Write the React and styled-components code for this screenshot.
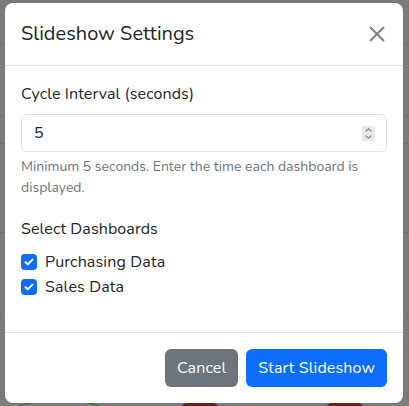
import React from "react";
import styled, { createGlobalStyle } from "styled-components";

const Global = createGlobalStyle`
  html, body { margin: 0; padding: 0; }
  body {
    width: 409px; height: 406px; overflow: hidden;
    background: #7b7b7b;
    font-family: "Nunito", "Lato", "Noto Sans", sans-serif;
    color: #212529;
  }
  * { box-sizing: border-box; }
`;

const Backdrop = styled.div`
  position: relative;
  width: 409px;
  height: 406px;
  padding: 3px 6px 0 5px;
  background:
    linear-gradient(#6f6f6f, #6f6f6f) 0 44px / 100% 1px no-repeat,
    linear-gradient(#707070, #707070) 0 115px / 100% 1px no-repeat,
    linear-gradient(#707070, #707070) 0 143px / 100% 1px no-repeat,
    linear-gradient(#707070, #707070) 0 232px / 100% 1px no-repeat,
    linear-gradient(#707070, #707070) 0 313px / 100% 1px no-repeat,
    #7b7b7b;
`;

const Blob = styled.div`
  position: absolute;
  top: 400px;
  left: ${(p) => p.$x}px;
  width: ${(p) => p.$w}px;
  height: 20px;
  border-radius: 50%;
  background: ${(p) => p.$bg};
  border: ${(p) => p.$border};
`;

const Modal = styled.div`
  position: relative;
  width: 398px;
  background: #fff;
  border-radius: 8px;
  overflow: hidden;
`;

const Header = styled.div`
  display: flex;
  align-items: center;
  justify-content: space-between;
  padding: 16px;
  border-bottom: 1px solid #dee2e6;
`;

const Title = styled.h5`
  margin: 0;
  font-size: 20px;
  font-weight: 400;
  line-height: 30px;
`;

const CloseBtn = styled.button`
  width: 24px;
  height: 24px;
  padding: 4px;
  margin-right: -2px;
  border: 0;
  background: transparent;
  opacity: 0.5;
  display: flex;
  align-items: center;
  justify-content: center;
`;

const Body = styled.div`
  padding: 16px 16px 17px;
`;

const Group = styled.div`
  margin-bottom: ${(p) => p.$mb}px;
`;

const Label = styled.div`
  font-size: 16px;
  line-height: 24px;
  margin-bottom: ${(p) => p.$mb || 8}px;
  letter-spacing: 0.1px;
`;

const InputWrap = styled.div`
  position: relative;
`;

const Input = styled.input`
  display: block;
  width: 100%;
  height: 38px;
  padding: 6px 12px;
  font-family: inherit;
  font-size: 16px;
  color: #212529;
  border: 1px solid #dee2e6;
  border-radius: 6px;
  outline: none;
`;

const Spinner = styled.span`
  position: absolute;
  right: 12px;
  top: 12px;
  width: 13px;
  height: 15px;
  background: #e9e9ed;
  display: flex;
  align-items: center;
  justify-content: center;
`;

const Help = styled.div`
  margin-top: 4px;
  font-size: 14px;
  line-height: 21px;
  color: #6c757d;
`;

const Check = styled.label`
  display: flex;
  align-items: center;
  gap: 8px;
  min-height: 24px;
  margin-bottom: 1px;
  font-size: 16px;
  line-height: 24px;
  letter-spacing: 0.15px;
`;

const Box = styled.span`
  width: 16px;
  height: 16px;
  border-radius: 4px;
  background: #0d6efd;
  display: flex;
  align-items: center;
  justify-content: center;
`;

const Footer = styled.div`
  display: flex;
  justify-content: flex-end;
  gap: 8px;
  padding: 16px;
  border-top: 1px solid #dee2e6;
`;

const Btn = styled.button`
  height: 38px;
  padding: 6px 12px;
  border: 0;
  border-radius: 6px;
  font-family: inherit;
  font-size: 16px;
  line-height: 24px;
  letter-spacing: 0.12px;
  color: #fff;
  background: ${(p) => (p.$primary ? "#0d6efd" : "#6c757d")};
`;

const CheckIcon = () => (
  <svg width="10" height="8" viewBox="0 0 10 8">
    <path d="M1.5 4.2 L3.8 6.3 L8.5 1.6" fill="none" stroke="#fff" strokeWidth="2" strokeLinecap="round" strokeLinejoin="round" />
  </svg>
);

export default function App() {
  return (
    <>
      <Global />
      <Backdrop>
        <Blob $x={14} $w={90} $bg="transparent" $border="1.5px solid #1d5a2a" />
        <Blob $x={180} $w={40} $bg="#6e1c1c" $border="none" />
        <Blob $x={325} $w={40} $bg="#6e1c1c" $border="none" />
        <Modal>
          <Header>
            <Title>Slideshow Settings</Title>
            <CloseBtn aria-label="Close">
              <svg width="16" height="16" viewBox="0 0 16 16">
                <path d="M1 1 L15 15 M15 1 L1 15" stroke="#000" strokeWidth="2" />
              </svg>
            </CloseBtn>
          </Header>
          <Body>
            <Group $mb={19}>
              <Label>Cycle Interval (seconds)</Label>
              <InputWrap>
                <Input type="text" defaultValue="5" />
                <Spinner>
                  <svg width="9" height="13" viewBox="0 0 9 13">
                    <path d="M1.5 4.5 L4.5 1.8 L7.5 4.5 M1.5 8.5 L4.5 11.2 L7.5 8.5" fill="none" stroke="#8a8a8f" strokeWidth="1.1" />
                  </svg>
                </Spinner>
              </InputWrap>
              <Help>Minimum 5 seconds. Enter the time each dashboard is displayed.</Help>
            </Group>
            <Group $mb={16}>
              <Label $mb={9}>Select Dashboards</Label>
              <Check>
                <Box><CheckIcon /></Box>
                Purchasing Data
              </Check>
              <Check>
                <Box><CheckIcon /></Box>
                Sales Data
              </Check>
            </Group>
          </Body>
          <Footer>
            <Btn>Cancel</Btn>
            <Btn $primary>Start Slideshow</Btn>
          </Footer>
        </Modal>
      </Backdrop>
    </>
  );
}
